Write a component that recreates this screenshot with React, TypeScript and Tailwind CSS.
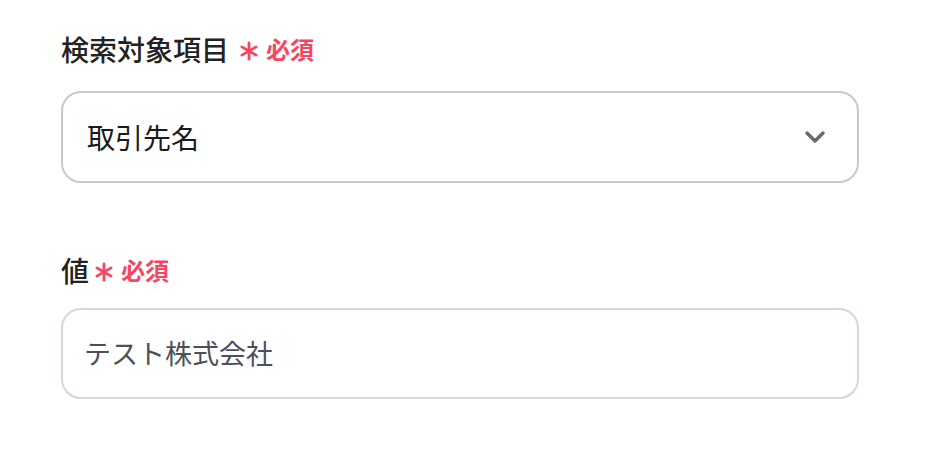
import React from "react";

function Required() {
  return (
    <span className="ml-[8px] inline-flex items-center gap-[7px] text-[#f5455f]">
      <svg width="20" height="20" viewBox="0 0 20 20" className="mt-[3px]">
        <g stroke="#f5455f" strokeWidth="2.8" strokeLinecap="round">
          <line x1="10" y1="1.8" x2="10" y2="18.2" />
          <line x1="2.9" y1="5.9" x2="17.1" y2="14.1" />
          <line x1="2.9" y1="14.1" x2="17.1" y2="5.9" />
        </g>
      </svg>
      <span className="text-[24px] font-semibold">必須</span>
    </span>
  );
}

export default function App() {
  return (
    <div
      className="w-[932px] h-[460px] bg-white px-[61px] pt-[30px]"
      style={{ fontFamily: '"Noto Sans CJK JP", "Noto Sans", sans-serif' }}
    >
      <div className="w-[798px]">
        <div className="flex items-center text-[28px] leading-[38px] text-[#222] font-medium">
          検索対象項目
          <span className="ml-[2px] inline-flex">
            <Required />
          </span>
        </div>
        <div className="mt-[23px] h-[92px] rounded-[20px] border-2 border-[#c9c9c9] flex items-center justify-between pl-[24px] pr-[30px]">
          <span className="text-[28px] text-[#1a1a1a]">取引先名</span>
          <svg width="24" height="16" viewBox="0 0 24 16">
            <path d="M4 4 L12 12 L20 4" fill="none" stroke="#6b6b6b" strokeWidth="3.5" strokeLinecap="round" strokeLinejoin="round" />
          </svg>
        </div>
        <div className="mt-[68px] flex items-center text-[28px] leading-[38px] text-[#222] font-medium">
          値
          <span className="-ml-[3px] inline-flex">
            <Required />
          </span>
        </div>
        <div className="mt-[19px] h-[91px] rounded-[20px] border-2 border-[#d3d7de] flex items-center pl-[21px]">
          <span className="text-[27px] text-[#4b5058]">テスト株式会社</span>
        </div>
      </div>
    </div>
  );
}
